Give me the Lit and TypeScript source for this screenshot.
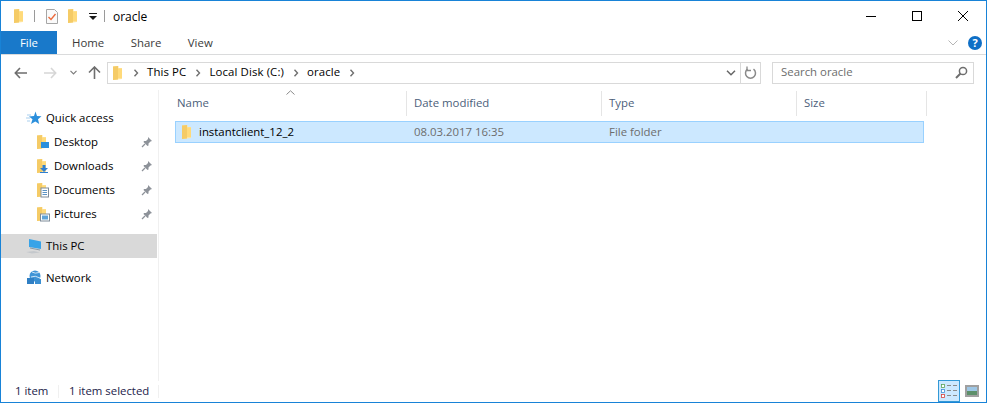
import { LitElement, html, css, svg } from "lit";
import { customElement } from "lit/decorators.js";

// folder glyph drawn in a 16x16 box, overlay is the badge of the known folders
const folder = (overlay: unknown = "") => html`<svg class="ico" width="16" height="16" viewBox="0 0 16 16">
  <path d="M3 1.5 L8.5 1 L8.5 3 L12 3 L12 14 L3 15Z" fill="#ffe49c"/>
  <path d="M3 1.5 L8 1 L8 14.5 L3 15Z" fill="#f5cb66"/>
  <path d="M8 3.5 L12 3.5 L12 13 L8 13Z" fill="#ffda7a"/>
  ${overlay}
</svg>`;

const pin = html`<svg class="pin" width="12" height="12" viewBox="0 0 12 12">
  <path d="M7 1 L11 5 L9.5 5.6 L7.5 7.5 L7.5 9.5 L6.5 10 L2.5 6 L3 5 L5 5 L7 3Z" fill="#8d9299"/>
  <path d="M4 8 L1 11" stroke="#8d9299" stroke-width="1.2"/>
</svg>`;

const crumb = html`<svg class="crumb" width="6" height="8" viewBox="0 0 6 8"><path d="M1.5 .8 L4.5 4 L1.5 7.2" fill="none" stroke="#6f6f6f" stroke-width="1.4"/></svg>`;

const desktopOverlay = svg`<rect x="7" y="8" width="8" height="6" fill="#2b8fdc"/>`;
const downloadOverlay = svg`<path d="M8.5 7 H11.5 V10 H14 L10 14 L6 10 H8.5Z" fill="#2f7fd0"/><rect x="6" y="14" width="8" height="1" fill="#2f7fd0"/>`;
const docOverlay = svg`<rect x="7" y="6" width="7.5" height="9" fill="#fff" stroke="#7f8c99"/><path d="M8.5 8.5h4.5M8.5 10.5h4.5M8.5 12.5h4.5" stroke="#5b93c4"/>`;
const picOverlay = svg`<rect x="6.5" y="8" width="9" height="7" fill="#fff" stroke="#7f8c99"/><rect x="8" y="9.5" width="6" height="4" fill="#5ea3d8"/>`;

@customElement("app-root")
export class AppRoot extends LitElement {
  static styles = css`
    :host {
      display: block;
      width: 987px;
      height: 403px;
      font-family: "Open Sans", "Noto Sans", sans-serif;
      font-size: 11.4px;
      color: #000;
    }
    .win {
      box-sizing: border-box;
      width: 987px;
      height: 403px;
      border: 1px solid #1883d7;
      background: #fff;
      display: flex;
      flex-direction: column;
      overflow: hidden;
    }
    .ico { display: block; flex: none; }

    .title {
      height: 30px;
      flex: none;
      display: flex;
      align-items: center;
      padding-left: 10px;
    }
    .title .sep { width: 1px; height: 12px; background: #9a9a9a; margin-left: 7px; }
    .title .page { margin-left: 11px; }
    .title .folder2 { margin-left: 7px; }
    .title .qat { margin-left: 8px; }
    .title .name { margin-left: 8px; font-size: 12px; }
    .title .spacer { flex: 1; }
    .winbtn {
      width: 46px;
      height: 30px;
      display: flex;
      align-items: center;
      justify-content: center;
    }

    .tabs {
      height: 23px;
      flex: none;
      display: flex;
      align-items: center;
      border-bottom: 1px solid #dadbdc;
    }
    .tab-file {
      width: 56px;
      height: 23px;
      background: #1979ca;
      color: #fff;
      display: flex;
      align-items: center;
      justify-content: center;
    }
    .tab-list { display: flex; gap: 26.5px; margin-left: 15px; color: #3b3b3b; }
    .tabs .spacer { flex: 1; }
    .help {
      width: 14px;
      height: 14px;
      border-radius: 50%;
      background: #0f6fc6;
      color: #fff;
      font-size: 11px;
      font-weight: 700;
      line-height: 14px;
      text-align: center;
      margin: 0 4px 0 10px;
    }

    .nav {
      height: 35px;
      flex: none;
      display: flex;
      align-items: center;
      padding-left: 13px;
      box-sizing: border-box;
    }
    .nav-btns { display: flex; align-items: center; width: 93px; flex: none; }
    .nav-btns .fwd { margin-left: 17px; }
    .nav-btns .recent { margin-left: 13px; }
    .nav-btns .up { margin-left: 11px; }
    .address, .search {
      box-sizing: border-box;
      height: 22px;
      border: 1px solid #d9d9d9;
      display: flex;
      align-items: center;
    }
    .address { width: 654px; flex: none; padding-left: 2px; }
    .address .folder { margin-right: 7px; }
    .address .path { display: flex; align-items: center; flex: 1; letter-spacing: 0.12px; }
    .address .path span { margin: 0 9px 0 8px; padding-bottom: 2px; }
    .addr-end { display: flex; align-items: center; height: 100%; }
    .addr-end .divider { width: 1px; height: 100%; background: #d9d9d9; margin: 0 3px 0 4px; }
    .addr-end .refresh { margin-right: 3px; }
    .search {
      width: 202px;
      margin-left: 11px;
      flex: none;
      padding: 0 5px 0 8px;
      color: #6d6d6d;
      justify-content: space-between;
    }
    .search span { padding-bottom: 2px; }

    .body { flex: 1; display: flex; min-height: 0; }
    .side {
      width: 158px;
      flex: none;
      box-sizing: border-box;
      border-right: 1px solid #f0f0f0;
      padding-top: 16px;
      display: flex;
      flex-direction: column;
    }
    .item {
      height: 24px;
      display: flex;
      align-items: center;
      flex: none;
      margin-right: 1px;
      padding-left: 25px;
      gap: 4px;
    }
    .item.sub { padding-left: 33px; gap: 4px; }
    .item .label { flex: 1; padding-bottom: 1px; }
    .item .pin { margin-right: 4px; }
    .item.sel { background: #d9d9d9; margin-top: 8px; }
    .item.net { margin-top: 8px; }

    .main { flex: 1; display: flex; flex-direction: column; padding-top: 1px; min-width: 0; }
    .head {
      height: 25px;
      display: grid;
      grid-template-columns: 248px 195px 195px 130px;
      position: relative;
    }
    .head div {
      border-right: 1px solid #e5e5e5;
      color: #4c607a;
      padding-left: 7px;
      line-height: 23px;
      box-sizing: border-box;
    }
    .head div:first-of-type { padding-left: 18px; }
    .sort { position: absolute; left: 127px; top: -1px; }
    .row {
      margin: 5px 0 0 16px;
      box-sizing: border-box;
      height: 22px;
      width: 749px;
      background: #cce8ff;
      border: 1px solid #99d1ff;
      display: grid;
      grid-template-columns: 231px 195px 195px;
      align-items: center;
      color: #6d6d6d;
    }
    .row .first { display: flex; align-items: center; gap: 4px; color: #000; padding-left: 3px; }
    .row .first span { padding-bottom: 1px; }
    .row .cell { padding: 0 0 1px 7px; }

    .status {
      height: 21px;
      flex: none;
      display: flex;
      align-items: center;
      color: #22224a;
      padding-left: 14px;
    }
    .status .s1 { width: 43px; padding-bottom: 2px; }
    .status .divider { width: 1px; height: 13px; background: #f0f0f0; }
    .status .s2 { margin-left: 10px; width: 89px; padding-bottom: 2px; }
    .status .spacer { flex: 1; }
    .views { display: flex; margin-right: 3px; margin-top: -2px; gap: 1px; }
    .view {
      box-sizing: border-box;
      width: 22px;
      height: 22px;
      display: flex;
      align-items: center;
      justify-content: center;
    }
    .view.on { background: #cce8ff; border: 1px solid #3399d6; }
  `;

  render() {
    return html`<div class="win">
      <div class="title">
        ${folder()}
        <div class="sep"></div>
        <svg class="ico page" width="12" height="15" viewBox="0 0 12 15">
          <path d="M.5 .5H8.5L11.5 3.5V14.5H.5Z" fill="#fafafa" stroke="#a6a6a6"/>
          <path d="M2.5 8 L5 10.5 L9.5 5" fill="none" stroke="#ec6a3c" stroke-width="1.4"/>
        </svg>
        <span class="folder2">${folder()}</span>
        <svg class="ico qat" width="8" height="8" viewBox="0 0 8 8">
          <rect x="0" y="1" width="8" height="1" fill="#1a1a1a"/><path d="M0 4H8L4 8Z" fill="#1a1a1a"/>
        </svg>
        <div class="sep"></div>
        <span class="name">oracle</span>
        <div class="spacer"></div>
        <div class="winbtn"><svg width="10" height="10" viewBox="0 0 10 10"><rect y="5" width="10" height="1"/></svg></div>
        <div class="winbtn"><svg width="10" height="10" viewBox="0 0 10 10"><rect x=".5" y=".5" width="9" height="9" fill="none" stroke="#000"/></svg></div>
        <div class="winbtn"><svg width="10" height="10" viewBox="0 0 10 10"><path d="M0 0L10 10M10 0L0 10" stroke="#000" fill="none"/></svg></div>
      </div>

      <div class="tabs">
        <div class="tab-file">File</div>
        <div class="tab-list"><span>Home</span><span>Share</span><span>View</span></div>
        <div class="spacer"></div>
        <svg width="10" height="6" viewBox="0 0 10 6"><path d="M.5 .5L5 5L9.5 .5" fill="none" stroke="#b5b5b5"/></svg>
        <div class="help">?</div>
      </div>

      <div class="nav">
        <div class="nav-btns">
          <svg class="ico" width="13" height="12" viewBox="0 0 13 12"><path d="M6 1L1.3 6L6 11M1.5 6H13" fill="none" stroke="#6e6e6e" stroke-width="1.6"/></svg>
          <svg class="ico fwd" width="13" height="12" viewBox="0 0 13 12"><path d="M7 1L11.7 6L7 11M11.5 6H0" fill="none" stroke="#d6d6d6" stroke-width="1.6"/></svg>
          <svg class="ico recent" width="7" height="5" viewBox="0 0 7 5"><path d="M.5 .8L3.5 3.8L6.5 .8" fill="none" stroke="#7d7d7d" stroke-width="1.2"/></svg>
          <svg class="ico up" width="13" height="13" viewBox="0 0 13 13"><path d="M1 6.5L6.5 1L12 6.5M6.5 1.5V13" fill="none" stroke="#6e6e6e" stroke-width="1.6"/></svg>
        </div>
        <div class="address">
          <span class="folder">${folder()}</span>
          <div class="path">
            ${crumb}<span>This PC</span>${crumb}<span>Local Disk (C:)</span>${crumb}<span>oracle</span>${crumb}
          </div>
          <div class="addr-end">
            <svg width="10" height="6" viewBox="0 0 10 6"><path d="M1 .8L5 4.8L9 .8" fill="none" stroke="#666" stroke-width="1.5"/></svg>
            <div class="divider"></div>
            <svg class="refresh" width="13" height="14" viewBox="0 0 13 14"><path d="M9.5 3.2A5 5 0 1 1 3.5 3.2" fill="none" stroke="#8a8a8a" stroke-width="1.5"/><path d="M3 .5V4.5H7" fill="none" stroke="#8a8a8a" stroke-width="1.3"/></svg>
          </div>
        </div>
        <div class="search">
          <span>Search oracle</span>
          <svg width="13" height="13" viewBox="0 0 13 13"><circle cx="8" cy="5" r="3.6" fill="none" stroke="#6e6e6e" stroke-width="1.5"/><path d="M5.5 7.5L1 12" stroke="#6e6e6e" stroke-width="2"/></svg>
        </div>
      </div>

      <div class="body">
        <div class="side">
          <div class="item">
            <svg class="ico" width="16" height="16" viewBox="0 0 16 16"><path d="M9.5 1.5L11 6L15.5 6.3L12 9.2L13.2 14L9.3 11.4L5 14L6.5 9.3L3 6.5L8 6Z" fill="#2b8fdc"/><path d="M1 5H5M0 8H4M1 11H4" stroke="#a9cfee"/></svg>
            <span class="label">Quick access</span>
          </div>
          <div class="item sub">${folder(desktopOverlay)}<span class="label">Desktop</span>${pin}</div>
          <div class="item sub">${folder(downloadOverlay)}<span class="label">Downloads</span>${pin}</div>
          <div class="item sub">${folder(docOverlay)}<span class="label">Documents</span>${pin}</div>
          <div class="item sub">${folder(picOverlay)}<span class="label">Pictures</span>${pin}</div>
          <div class="item sel">
            <svg class="ico" width="16" height="16" viewBox="0 0 16 16"><path d="M3 1L15 3.5V11L3 9Z" fill="#38a3e8"/><path d="M4 10L14 12" stroke="#8a9aa8"/><path d="M0 14L8 13L14 14.5L6 15.5Z" fill="#c4c8cc"/></svg>
            <span class="label">This PC</span>
          </div>
          <div class="item net">
            <svg class="ico" width="16" height="16" viewBox="0 0 16 16"><circle cx="9" cy="6" r="5.5" fill="#3f94d6"/><path d="M6 2Q9 4 13 2.5M5 7Q9 5 14 8" stroke="#cfe6f7" fill="none"/><rect x="1" y="8" width="7" height="6" fill="#2f7fc4"/><rect x="9" y="9" width="6" height="5" fill="#3a8fd2"/></svg>
            <span class="label">Network</span>
          </div>
        </div>

        <div class="main">
          <div class="head">
            <svg class="sort" width="9" height="5" viewBox="0 0 9 5"><path d="M.5 4.5L4.5 .8L8.5 4.5" fill="none" stroke="#8a8a8a"/></svg>
            <div>Name</div><div>Date modified</div><div>Type</div><div>Size</div>
          </div>
          <div class="row">
            <div class="first">${folder()}<span>instantclient_12_2</span></div>
            <div class="cell">08.03.2017 16:35</div>
            <div class="cell">File folder</div>
          </div>
        </div>
      </div>

      <div class="status">
        <span class="s1">1 item</span>
        <div class="divider"></div>
        <span class="s2">1 item selected</span>
        <div class="divider"></div>
        <div class="spacer"></div>
        <div class="views">
          <div class="view on">
            <svg width="16" height="14" viewBox="0 0 16 14">
              <rect x=".5" y=".5" width="3" height="3" fill="#fff" stroke="#5aa35a" stroke-width=".8"/>
              <rect x=".5" y="5.5" width="3" height="3" fill="#fff" stroke="#3f8ed8" stroke-width=".8"/>
              <rect x=".5" y="10.5" width="3" height="3" fill="#fff" stroke="#d8413f" stroke-width=".8"/>
              <path d="M6 1.5H10M12 1.5H16M6 6.5H10M12 6.5H16M6 11.5H10M12 11.5H16" stroke="#8a8a8a" stroke-width="1.2"/>
            </svg>
          </div>
          <div class="view">
            <svg width="14" height="12" viewBox="0 0 14 12">
              <rect x="1" y="1" width="12" height="10" fill="#fff" stroke="#a0a0a0" stroke-width="2"/>
              <rect x="2" y="2" width="10" height="4" fill="#9ec7e6"/><rect x="2" y="6" width="10" height="4" fill="#5d8f6a"/>
            </svg>
          </div>
        </div>
      </div>
    </div>`;
  }
}
